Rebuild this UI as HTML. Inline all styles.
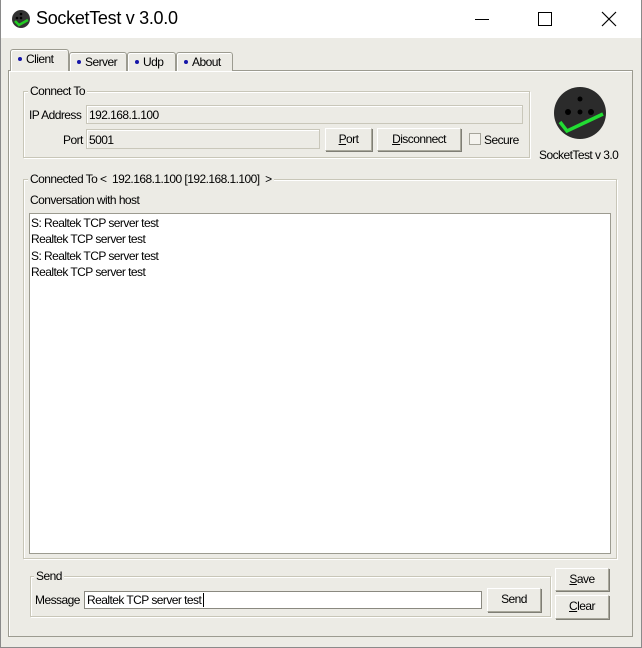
<!DOCTYPE html>
<html><head><style>
*{margin:0;padding:0;box-sizing:border-box}
body{width:642px;height:648px;background:#ecebe5;font-family:"Liberation Sans",sans-serif;font-size:12px;color:#000;position:relative;overflow:hidden}
.a{position:absolute}
.t{white-space:nowrap;letter-spacing:-0.55px}
.grp{border:1px solid #c8c6b8;box-shadow:inset 1px 1px 0 #fff,1px 1px 0 #fff}
.fld{background:#ecebe5;border:1px solid #c9c7ba;box-shadow:inset 1px 1px 0 #fff}
.btn{border:1px solid #a9a89c;border-top-color:#fff;border-left-color:#fff;box-shadow:1px 1px 0 #7f7e75;background:#ecebe5;text-align:center;line-height:20px}
.tab{border:1px solid #9c9b90;border-bottom:none;border-radius:3px 3px 0 0;background:#ecebe5;box-shadow:inset 1px 1px 0 #fff;padding-left:7px;line-height:18px}
.dot{display:inline-block;width:4px;height:4px;border-radius:50%;background:#1515a8;margin-right:4px;vertical-align:2px}
</style></head><body>
<div class="a" style="left:0;top:0;width:642px;height:38px;background:#fff"></div>
<div class="a" style="left:0;top:0;width:642px;height:648px;border:1px solid #8a8a8a;border-top:none"></div>
<svg class="a" style="left:11px;top:9px" width="20" height="20"><circle cx="10" cy="10" r="9" fill="#333"/><path d="M4 12 L8 16 L17 11" stroke="#2c2" stroke-width="2.5" fill="none"/><circle cx="10" cy="5" r="1.3" fill="#000"/><circle cx="6" cy="9" r="1.3" fill="#000"/><circle cx="10" cy="9" r="1.3" fill="#000"/></svg>
<div class="a" style="left:36px;top:8px;font-size:18px;letter-spacing:-0.3px;white-space:nowrap">SocketTest v 3.0.0</div>
<div class="a" style="left:475px;top:19px;width:14px;height:1px;background:#000"></div>
<div class="a" style="left:538px;top:12px;width:14px;height:14px;border:1px solid #000"></div>
<svg class="a" style="left:601px;top:11px" width="16" height="16"><path d="M1 1L15 15M15 1L1 15" stroke="#000" stroke-width="1.2"/></svg>
<div class="a" style="left:8px;top:70px;width:625px;height:567px;border:1px solid #9c9b90;box-shadow:inset 1px 1px 0 #fff"></div>
<div class="a tab t" style="left:69px;top:52px;width:58px;height:19px"><span class="dot"></span>Server</div>
<div class="a tab t" style="left:127px;top:52px;width:49px;height:19px"><span class="dot"></span>Udp</div>
<div class="a tab t" style="left:176px;top:52px;width:57px;height:19px"><span class="dot"></span>About</div>
<div class="a tab t" style="left:10px;top:49px;width:59px;height:22px;border-color:#9c9b90"><span class="dot"></span>Client</div>
<div class="a grp" style="left:23px;top:91px;width:507px;height:67px"></div>
<div class="a t" style="left:28px;top:84px;background:#ecebe5;padding:0 2px">Connect To</div>
<div class="a t" style="left:29px;top:108px">IP Address</div>
<div class="a fld t" style="left:86px;top:105px;width:437px;height:19px;padding:2px 2px">192.168.1.100</div>
<div class="a t" style="left:63px;top:133px">Port</div>
<div class="a fld t" style="left:86px;top:129px;width:234px;height:20px;padding:3px 2px">5001</div>
<div class="a btn t" style="left:325px;top:128px;width:47px;height:23px"><u>P</u>ort</div>
<div class="a btn t" style="left:377px;top:128px;width:84px;height:23px"><u>D</u>isconnect</div>
<div class="a" style="left:469px;top:133px;width:12px;height:12px;border:1px solid #a5a49a;background:#f4f3ee"></div>
<div class="a t" style="left:484px;top:133px">Secure</div>
<svg class="a" style="left:553px;top:86px" width="54" height="54"><circle cx="27" cy="27" r="26" fill="#2b2b2b"/><circle cx="27" cy="13" r="2.5" fill="#000"/><circle cx="15" cy="26" r="3" fill="#000"/><circle cx="27" cy="26" r="2.5" fill="#000"/><circle cx="38" cy="26" r="3" fill="#000"/><path d="M7 36 L14 45 L50 28" stroke="#22dd33" stroke-width="3.5" fill="none"/></svg>
<div class="a t" style="left:539px;top:148px">SocketTest v 3.0</div>
<div class="a grp" style="left:23px;top:179px;width:594px;height:380px"></div>
<div class="a t" style="left:28px;top:172px;background:#ecebe5;padding:0 2px">Connected To &lt;&nbsp; 192.168.1.100 [192.168.1.100]&nbsp; &gt;</div>
<div class="a t" style="left:30px;top:193px">Conversation with host</div>
<div class="a t" style="left:29px;top:213px;width:582px;height:341px;background:#fff;border:1px solid #9c9b90;padding:1px 1px;line-height:16.3px">S: Realtek TCP server test<br>Realtek TCP server test<br>S: Realtek TCP server test<br>Realtek TCP server test</div>
<div class="a grp" style="left:30px;top:576px;width:521px;height:41px"></div>
<div class="a t" style="left:34px;top:569px;background:#ecebe5;padding:0 2px">Send</div>
<div class="a t" style="left:35px;top:593px">Message</div>
<div class="a t" style="left:84px;top:591px;width:398px;height:18px;background:#fff;border:1px solid #8a8980;padding:1px 2px">Realtek TCP server test<span style="border-left:1px solid #000;margin-left:2px"></span></div>
<div class="a btn t" style="left:487px;top:588px;width:54px;height:24px">Send</div>
<div class="a btn t" style="left:555px;top:568px;width:54px;height:23px"><u>S</u>ave</div>
<div class="a btn t" style="left:555px;top:595px;width:54px;height:24px"><u>C</u>lear</div>
</body></html>
